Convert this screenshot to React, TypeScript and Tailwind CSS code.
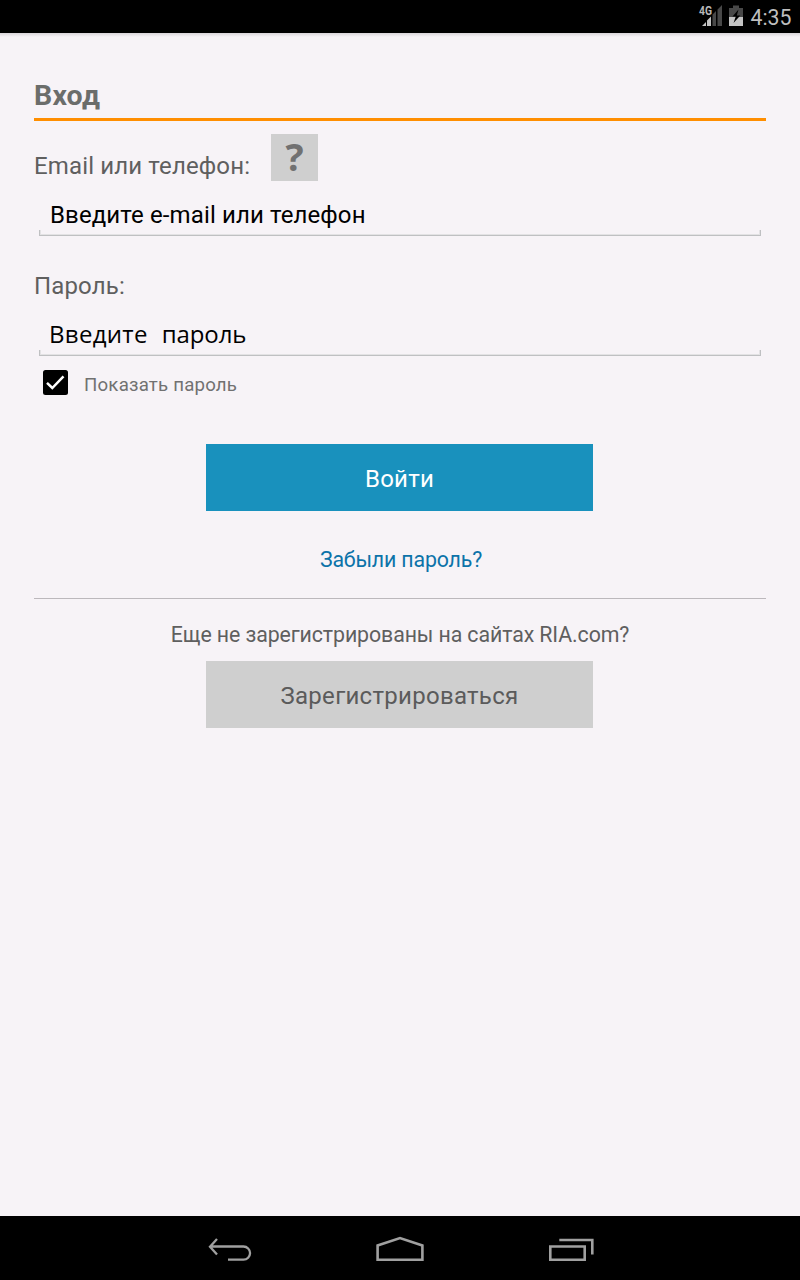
import React from "react";

function StatusBar() {
  return (
    <header className="flex h-[33px] shrink-0 justify-end bg-black">
      <svg width="120" height="33" viewBox="680 0 120 33">
        <path d="M702 26 L706 22 V26 Z M707 26 V20.500 L711 16.500 V26 Z" fill="#c4c4c4" />
        <path d="M712.500 26 V14.500 L716 11 V26 Z M717.500 26 V9.500 L722 5 V26 Z" fill="#484848" />
        <text x="699" y="15" className="fill-[#b8b8b8] font-['Roboto'] text-[12.5px] font-bold" textLength="13" lengthAdjust="spacingAndGlyphs">4G</text>
        <path d="M729 8 H733 V5.500 H739 V8 H743 V17 H729 Z" fill="#484848" />
        <path d="M729 17 H743 V26 H729 Z" fill="#c4c4c4" />
        <path d="M738.500 9.500 L732.500 16.500 H735.800 L733.500 23 L740.300 15.500 H736.800 Z" fill="#000" />
        <text x="750.5" y="25" className="fill-[#bebebe] font-['Roboto'] text-[21.3px]" textLength="41" lengthAdjust="spacingAndGlyphs">4:35</text>
      </svg>
    </header>
  );
}

function FieldLine() {
  return (
    <div className="mx-[5px] h-[6px] border-x border-b border-[#bfc0c2]">
      <div className="h-full border-x border-b border-[#e3e2e4]" />
    </div>
  );
}

function NavBar() {
  return (
    <nav className="h-16 shrink-0 bg-black">
      <svg width="800" height="64" viewBox="0 1216 800 64" fill="none" stroke="#a0a0a0">
        <path d="M217 1239 L210 1246.700 L217 1254.500 M210.500 1246.500 H243.500 A6.600 6.600 0 0 1 243.500 1259.700 H228" strokeWidth="2.300" />
        <path d="M377.600 1259.700 V1245.500 L400 1238 L422.400 1245.500 V1259.700 Z" strokeWidth="2.600" />
        <path d="M550.300 1246.500 H584.700 V1259.700 H550.300 Z M559.300 1240 H592.300 V1254.500" strokeWidth="2.600" />
      </svg>
    </nav>
  );
}

export default function App() {
  return (
    <div className="flex h-[1280px] w-[800px] flex-col overflow-hidden bg-[#f7f3f7] font-['Roboto',sans-serif]">
      <StatusBar />
      <div className="h-1 shrink-0 bg-gradient-to-b from-[#d9d5d9] to-[#f7f3f7]" />
      <main className="flex-1 px-[34px]">
        <h1 className="mt-[38px] h-[43px] text-[28.5px] leading-[42px] font-bold tracking-[0.2px] text-[#6b6d6b]">Вход</h1>
        <div className="h-[3px] bg-[#ff8e00]" />

        <div className="mt-[13px] flex h-[47px]">
          <label className="mt-4 w-[237px] text-2xl leading-8 tracking-[0.14px] whitespace-nowrap text-[#5f5f5f]">Email или телефон:</label>
          <button className="flex size-[47px] justify-center bg-[#cfcfcf] font-['Open_Sans',sans-serif] text-[38px] leading-[45px] font-bold text-[#717171]">?</button>
        </div>
        <div className="mt-[18px] h-[31px] pl-4 text-2xl leading-8 tracking-[0.12px] text-black">Введите e-mail или телефон</div>
        <FieldLine />

        <label className="mt-[34px] block h-8 text-2xl leading-8 tracking-[0.15px] text-[#5f5f5f]">Пароль:</label>
        <div className="mt-[16px] flex h-8 gap-[14px] pl-[15px] font-['Open_Sans',sans-serif] text-2xl leading-8 text-black">
          <span className="tracking-[0.3px]">Введите</span>
          <span className="tracking-[-0.1px]">пароль</span>
        </div>
        <FieldLine />

        <div className="mt-[14px] flex h-[26px] items-start pl-[9px]">
          <svg width="25" height="25" viewBox="0 0 25 25" fill="none">
            <rect width="25" height="25" rx="2.500" fill="#000" />
            <path d="M4 12.800 L9.300 18 L20.500 6.300" stroke="#fff" strokeWidth="2.500" />
          </svg>
          <span className="ml-4 text-[18.67px] leading-[30px] tracking-[0.2px] text-[#717171]">Показать пароль</span>
        </div>

        <button className="mt-12 ml-[172px] flex h-[67px] w-[387px] justify-center bg-[#1991bd] pt-px text-2xl leading-[68px] tracking-[0.2px] text-white">Войти</button>
        <a className="mt-[33px] block h-8 pl-[2px] text-center text-[21.33px] leading-8 tracking-[-0.16px] text-[#0d73a9]">Забыли пароль?</a>
        <div className="mt-[22px] h-px bg-[#bcb8bc]" />
        <p className="mt-5 h-8 text-center text-[21.33px] leading-8 tracking-[-0.1px] whitespace-nowrap text-[#5f5f5f]">Еще не зарегистрированы на сайтах RIA.com?</p>
        <button className="mt-[10px] ml-[172px] flex h-[67px] w-[387px] justify-center bg-[#cfcfcf] pt-px text-2xl leading-[68px] tracking-[0.28px] text-[#5b5b5b]">Зарегистрироваться</button>
      </main>
      <NavBar />
    </div>
  );
}
